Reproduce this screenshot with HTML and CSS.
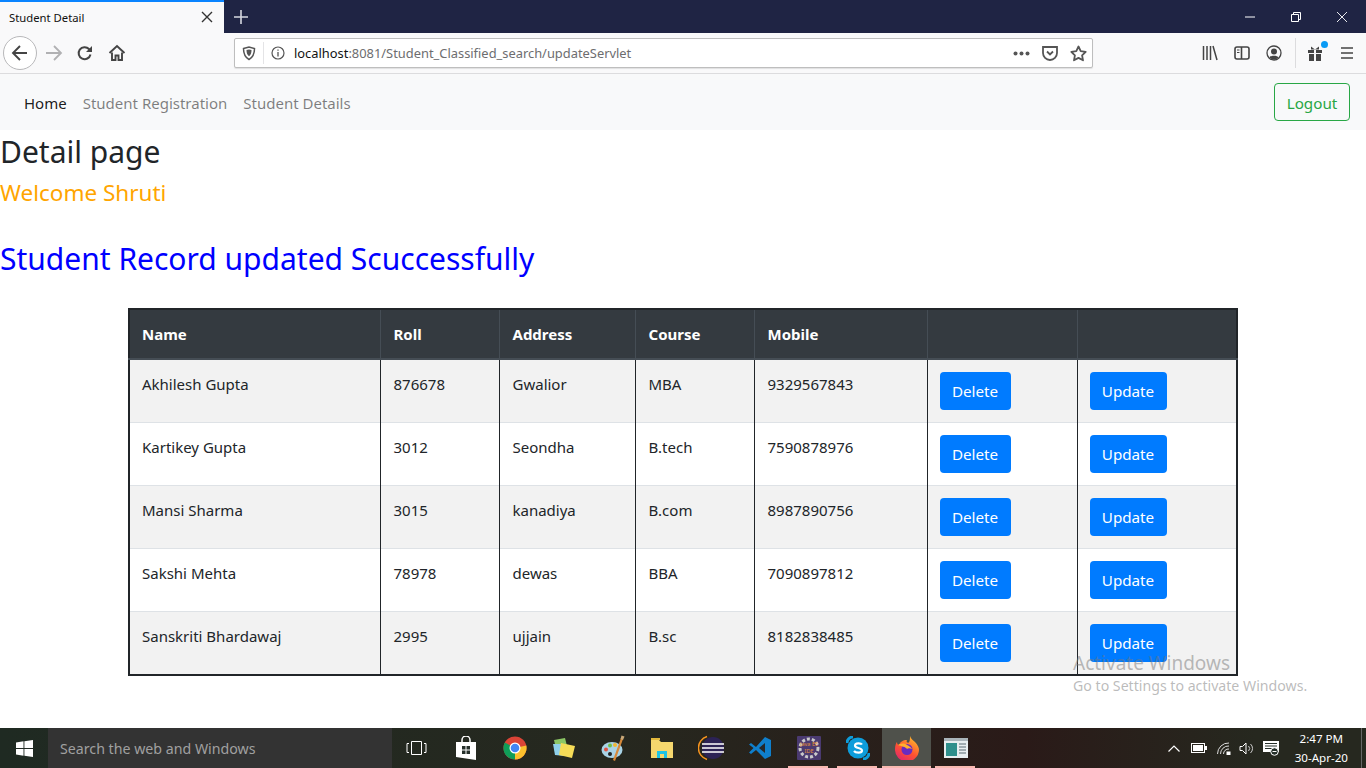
FILE: index.html
```html
<!DOCTYPE html>
<html lang="en">
<head>
<meta charset="utf-8">
<title>Student Detail</title>
<link rel="stylesheet" href="styles.css">
</head>
<body>
<div class="screen">
  <header class="chrome">
    <div class="tabstrip">
      <div class="tab">
        <span class="tab-title">Student Detail</span>
        <svg class="tab-x" width="12" height="12" viewBox="0 0 12 12"><path d="M1 1l10 10M11 1L1 11" stroke="#333" stroke-width="1.4"/></svg>
      </div>
      <svg class="newtab" width="16" height="16" viewBox="0 0 16 16"><path d="M8 1v14M1 8h14" stroke="#d5d7e0" stroke-width="1.6"/></svg>
      <div class="winbtns">
        <svg width="12" height="12" viewBox="0 0 12 12"><path d="M1 6h10" stroke="#fff"/></svg>
        <svg width="12" height="12" viewBox="0 0 12 12"><path d="M1.500 3.500h7v7h-7zM3.500 3.500v-2h7v7h-2" fill="none" stroke="#fff"/></svg>
        <svg width="12" height="12" viewBox="0 0 12 12"><path d="M1 1l10 10M11 1L1 11" stroke="#fff" stroke-width=".9"/></svg>
      </div>
    </div>
    <div class="toolbar">
      <div class="nav-left">
        <span class="back"><svg width="18" height="18" viewBox="0 0 18 18"><path d="M2 9h14M9 2L2 9l7 7" fill="none" stroke="#444" stroke-width="1.900"/></svg></span>
        <svg class="fwd" width="18" height="18" viewBox="0 0 18 18"><path d="M1 9h15M9 2l7 7-7 7" fill="none" stroke="#b1b1b3" stroke-width="1.800"/></svg>
        <svg class="reload" width="16" height="16" viewBox="0 0 16 16"><path d="M13.500 9.500A6 6 0 1 1 12 4l2 2" fill="none" stroke="#444" stroke-width="2"/><path d="M15 1v6H9z" fill="#444"/></svg>
        <svg class="home" width="18" height="18" viewBox="0 0 18 18"><path d="M1.500 9L9 2l7.500 7" fill="none" stroke="#444" stroke-width="1.900"/><path d="M4 8.500V16h3.500v-4.500h3V16H14V8.500" fill="none" stroke="#444" stroke-width="1.900"/></svg>
      </div>
      <div class="urlbar">
        <svg class="shield" width="14" height="15" viewBox="0 0 14 15"><path d="M1.500 2.500L7 1l5.500 1.500c0 5-1 8.500-5.500 11C2.500 11 1.500 7.500 1.500 2.500z" fill="none" stroke="#555" stroke-width="1.500"/><path d="M4.500 4L7 3.400 9.500 4c0 3-.6 4.800-2.500 6.200C5.100 8.800 4.500 7 4.500 4z" fill="#555"/></svg>
        <span class="url-sep"></span>
        <svg class="info" width="14" height="14" viewBox="0 0 14 14"><circle cx="7" cy="7" r="6" fill="none" stroke="#555" stroke-width="1.200"/><path d="M7 6v4.500M7 3.500v1.300" stroke="#555" stroke-width="1.300"/></svg>
        <span class="url"><span class="host">localhost</span>:8081/Student_Classified_search/updateServlet</span>
        <span class="url-actions">
          <svg width="17" height="5" viewBox="0 0 17 5"><circle cx="2.500" cy="2.500" r="2" fill="#555"/><circle cx="8.500" cy="2.500" r="2" fill="#555"/><circle cx="14.500" cy="2.500" r="2" fill="#555"/></svg>
          <svg width="16" height="16" viewBox="0 0 16 16"><path d="M1 2h14v6a7 7 0 0 1-14 0z" fill="none" stroke="#555" stroke-width="1.800"/><path d="M5 6.500l3 3 3-3" fill="none" stroke="#555" stroke-width="1.800"/></svg>
          <svg width="17" height="17" viewBox="0 0 17 17"><path d="M8.500 1.500l2.200 4.600 5 .7-3.600 3.500.9 5-4.500-2.400L4 15.300l.9-5L1.300 6.800l5-.7z" fill="none" stroke="#555" stroke-width="1.800" stroke-linejoin="round"/></svg>
        </span>
      </div>
      <div class="tools">
        <svg width="16" height="16" viewBox="0 0 16 16"><path d="M1.500 1v14M5 1v14M8.500 1v14M11 1l4 14" stroke="#444" stroke-width="1.500"/></svg>
        <svg width="16" height="16" viewBox="0 0 16 16"><rect x="1" y="2" width="14" height="12" rx="2" fill="none" stroke="#444" stroke-width="1.600"/><path d="M7.500 2v12" stroke="#444" stroke-width="1.600"/><path d="M3 5h2.500M3 7.500h2.500" stroke="#444"/></svg>
        <svg width="16" height="16" viewBox="0 0 16 16"><circle cx="8" cy="8" r="7" fill="none" stroke="#444" stroke-width="1.300"/><circle cx="8" cy="6.500" r="3" fill="#444"/><path d="M3.500 12.500c1-2.500 8-2.500 9 0a6 6 0 0 1-9 0z" fill="#444"/></svg>
        <span class="tool-sep"></span>
        <span class="gift">
          <svg width="16" height="18" viewBox="0 0 16 18"><path d="M1 6h6v3H1zM9 6h6v3H9zM2 10h5v7H2zM9 10h5v7H9z" fill="#444"/><path d="M4 2.500l4 3 4-3v3H4z" fill="#444"/></svg>
          <span class="gift-dot"></span>
        </span>
        <svg class="menu" width="14" height="14" viewBox="0 0 14 14"><path d="M1 2h12M1 7h12M1 12h12" stroke="#444" stroke-width="1.600"/></svg>
      </div>
    </div>
  </header>

  <main class="page">
    <nav class="navbar">
      <ul class="nav-links">
        <li class="active">Home</li>
        <li>Student Registration</li>
        <li>Student Details</li>
      </ul>
      <button class="logout">Logout</button>
    </nav>
    <h2 class="title">Detail page</h2>
    <h4 class="welcome">Welcome Shruti</h4>
    <h2 class="updated">Student Record updated Scuccessfully</h2>
    <div class="table-wrap">
      <table class="students">
        <colgroup>
          <col class="c1"><col class="c2"><col class="c3"><col class="c4"><col class="c5"><col class="c6"><col class="c7">
        </colgroup>
        <thead>
          <tr><th>Name</th><th>Roll</th><th>Address</th><th>Course</th><th>Mobile</th><th></th><th></th></tr>
        </thead>
        <tbody>
          <tr><td>Akhilesh Gupta</td><td>876678</td><td>Gwalior</td><td>MBA</td><td>9329567843</td><td><a class="btn del">Delete</a></td><td><a class="btn upd">Update</a></td></tr>
          <tr><td>Kartikey Gupta</td><td>3012</td><td>Seondha</td><td>B.tech</td><td>7590878976</td><td><a class="btn del">Delete</a></td><td><a class="btn upd">Update</a></td></tr>
          <tr><td>Mansi Sharma</td><td>3015</td><td>kanadiya</td><td>B.com</td><td>8987890756</td><td><a class="btn del">Delete</a></td><td><a class="btn upd">Update</a></td></tr>
          <tr><td>Sakshi Mehta</td><td>78978</td><td>dewas</td><td>BBA</td><td>7090897812</td><td><a class="btn del">Delete</a></td><td><a class="btn upd">Update</a></td></tr>
          <tr><td>Sanskriti Bhardawaj</td><td>2995</td><td>ujjain</td><td>B.sc</td><td>8182838485</td><td><a class="btn del">Delete</a></td><td><a class="btn upd">Update</a></td></tr>
        </tbody>
      </table>
    </div>
    <div class="activate">
      <div class="act-1">Activate Windows</div>
      <div class="act-2">Go to Settings to activate Windows.</div>
    </div>
  </main>

  <footer class="taskbar">
    <span class="start"><svg width="17" height="17" viewBox="0 0 17 17"><path d="M0 2.400L7.500 1.300v6.700H0zM8.400 1.200L17 0v8H8.400zM0 9h7.500v6.700L0 14.600zM8.400 9H17v8l-8.600-1.200z" fill="#fff"/></svg></span>
    <span class="search">Search the web and Windows</span>
    <div class="task-icons">
      <span class="ti"><svg width="21" height="14" viewBox="0 0 21 14"><path d="M5.500.5h10v13h-10z" fill="none" stroke="#fff"/><path d="M3 2.500H1v9h2M18 2.500h2v9h-2" fill="none" stroke="#fff"/></svg></span>
      <span class="ti"><svg width="22" height="24" viewBox="0 0 22 24"><path d="M1 6h20v18L1 21z" fill="#fff"/><path d="M7 6V4a4 4 0 0 1 8 0v2" fill="none" stroke="#fff" stroke-width="1.500"/><path d="M7 10h3.500v3.500H7zM11.500 10H15v3.500h-3.500zM7 14.500h3.500V18H7zM11.500 14.500H15V18h-3.500z" fill="#26302a"/></svg></span>
      <span class="ti"><svg width="24" height="24" viewBox="0 0 24 24"><circle cx="12" cy="12" r="11.500" fill="#db4437"/><path d="M12 12L23.300 9.500A11.500 11.500 0 0 1 12 23.500z" fill="#fbc02d"/><path d="M12 12L12 23.500A11.500 11.500 0 0 1 1.800 6.500z" fill="#0f9d58"/><circle cx="12" cy="12" r="5.500" fill="#fff"/><circle cx="12" cy="12" r="4.300" fill="#4285f4"/></svg></span>
      <span class="ti"><svg width="26" height="22" viewBox="0 0 26 22"><path d="M3 3l11-2 3 12-11 3z" fill="#8cc665"/><path d="M2 7l10 0 2 12-10-1z" fill="#8ed0ea"/><path d="M10 6l14 3-3 12-13-3z" fill="#f6dc57"/></svg></span>
      <span class="ti"><svg width="24" height="26" viewBox="0 0 24 26"><ellipse cx="11" cy="15" rx="10.500" ry="8" fill="#a9d3e6"/><circle cx="5" cy="14.500" r="2" fill="#e15241"/><circle cx="9" cy="10.500" r="2" fill="#6fbf4a"/><circle cx="14" cy="10" r="2" fill="#f2b632"/><circle cx="9" cy="19" r="2" fill="#222"/><path d="M20 3l2 1-8 22-2-1z" fill="#d6893a"/><path d="M19.500 4l1-3.500 3 1-1.500 3.500z" fill="#c9a878"/></svg></span>
      <span class="ti"><svg width="22" height="20" viewBox="0 0 22 20"><path d="M0 2h8l2 2h12v16H0z" fill="#f5d76e"/><path d="M0 0h9v2H0z" fill="#e3b93d"/><path d="M6 13h10v7h-3v-4H9v4H6z" fill="#1ec4e6"/></svg></span>
      <span class="ti"><svg width="26" height="26" viewBox="0 0 26 26"><path d="M9 1.500a12 12 0 0 0 0 23" fill="none" stroke="#f7941e" stroke-width="1.500"/><circle cx="15" cy="13" r="11" fill="#2c2255"/><path d="M4 9h22M4 13h22M4 17h22" stroke="#fff" stroke-width="1.500"/></svg></span>
      <span class="ti"><svg width="24" height="24" viewBox="0 0 24 24"><path d="M17 1l6 3v16l-6 3-9-9-5 4-2-1.500L5.500 12 1 8.500 3 7l5 4z" fill="#0f7fcc"/><path d="M17 7v10l-6-5z" fill="#26282a"/></svg></span>
      <span class="ti ti-run"><svg width="24" height="24" viewBox="0 0 24 24"><rect width="24" height="24" rx="1" fill="#4a3a70"/><circle cx="12" cy="12" r="9" fill="none" stroke="#c9c9c9" stroke-width="3" stroke-dasharray="3 2"/><text x="12" y="10" class="jv" text-anchor="middle">Java EE</text><text x="12" y="17" class="jv" text-anchor="middle">IDE</text></svg></span>
      <span class="ti ti-run"><svg width="24" height="24" viewBox="0 0 24 24"><circle cx="12" cy="12" r="10.500" fill="#0d9ddb"/><path d="M1 7a6 6 0 0 1 6-6M23 17a6 6 0 0 1-6 6" stroke="#0d9ddb" stroke-width="3" fill="none"/><path d="M16 8.500c-1-1.500-7-2-7 1.200 0 3 7 1.600 7 4.800 0 3-6.500 2.500-8 .5" fill="none" stroke="#fff" stroke-width="2.200"/></svg></span>
      <span class="ti ti-active"><svg width="24" height="24" viewBox="0 0 24 24"><defs><linearGradient id="fx" x1="0.800" y1="0" x2="0.200" y2="1"><stop offset="0" stop-color="#ffc02c"/><stop offset=".55" stop-color="#ff5330"/><stop offset="1" stop-color="#e0246e"/></linearGradient></defs><path d="M15 0c1 3 3 4 5 6 3 3 4 6 4 8a12 12 0 1 1-24-1c0-3 1-6 2-7 0 2 1 3 2 3 1-3 4-5 8-5-1 2 0 2 1 3 2-1 2-4 2-7z" fill="url(#fx)"/><circle cx="12" cy="13.500" r="5.500" fill="#6a2bc0"/><path d="M3 9c3-2 7-2 9 0 2 1 4 2 5 4-2-1-4-1-5 0-1-2-6-3-9-4z" fill="#ffb02e"/></svg></span>
      <span class="ti ti-run"><svg width="24" height="20" viewBox="0 0 24 20"><rect width="24" height="20" fill="#e8eef0"/><rect y="0" width="24" height="3" fill="#aab4ba"/><rect x="2" y="5" width="11" height="13" fill="#2f8f8c"/><path d="M15 6h7M15 9h7M15 12h7M15 15h7" stroke="#5a6a72"/></svg></span>
    </div>
    <div class="tray">
      <svg class="t-caret" width="12" height="7" viewBox="0 0 12 7"><path d="M.5 6.500L6 1l5.500 5.500" fill="none" stroke="#fff" stroke-width="1.200"/></svg>
      <svg class="t-batt" width="16" height="10" viewBox="0 0 16 10"><rect x=".5" y=".5" width="13" height="9" fill="none" stroke="#fff"/><rect x="2" y="2" width="10" height="6" fill="#fff"/><rect x="14" y="3" width="2" height="4" fill="#fff"/></svg>
      <svg class="t-wifi" width="14" height="13" viewBox="0 0 14 13"><path d="M.5 12A11 11 0 0 1 12 1M3.500 12A8 8 0 0 1 12 4M6.500 12A5 5 0 0 1 12 7" fill="none" stroke="#ddd"/><rect x="9.500" y="9.500" width="4" height="3.500" fill="#fff"/></svg>
      <svg width="16" height="13" viewBox="0 0 16 13"><path d="M1 4.500h2.500L7 1v11L3.500 8.500H1z" fill="none" stroke="#fff"/><path d="M9.500 4a3.500 3.500 0 0 1 0 5M11.500 2a6 6 0 0 1 0 9" fill="none" stroke="#ccc"/></svg>
      <svg width="16" height="16" viewBox="0 0 16 16"><path d="M0 1h16v11H0z" fill="#fff"/><path d="M2 3.500h12M2 6h12M2 8.500h7" stroke="#26302a"/><circle cx="11.500" cy="11.500" r="3.800" fill="#26302a" stroke="#fff"/><path d="M9.500 11.500h4" stroke="#fff"/></svg>
      <div class="clock"><div>2:47 PM</div><div>30-Apr-20</div></div>
      <span class="desk-edge"></span>
    </div>
  </footer>
</div>
</body>
</html>
```
FILE: styles.css
```css
* { box-sizing: border-box; }
html, body { margin: 0; padding: 0; }
body { width: 1366px; height: 768px; overflow: hidden; background: #fff; font-family: "Noto Sans", "Open Sans", sans-serif; color: #212529; }
.screen { display: flex; flex-direction: column; width: 1366px; height: 768px; }

.tabstrip { display: flex; align-items: center; height: 33px; background: #1f2444; }
.tab { display: flex; align-items: center; justify-content: space-between; width: 224px; height: 33px; padding: 0 11px 1px 9px; background: #f9f9fa; border-top: 2px solid #0a84ff; }
.tab-title { font: 11.300px "Noto Sans", sans-serif; color: #111; }
.newtab { margin-left: 9px; }
.winbtns { display: flex; gap: 34px; margin-left: auto; margin-right: 18px; }

.toolbar { display: flex; align-items: center; height: 41px; background: #f9f9fa; border-bottom: 1px solid #dcdcde; padding-left: 3px; }
.nav-left { display: flex; align-items: center; width: 231px; }
.back { display: flex; align-items: center; justify-content: center; width: 34px; height: 34px; border: 1px solid #b8b8ba; border-radius: 50%; background: #fff; }
.fwd { margin-left: 8px; }
.reload { margin-left: 14px; }
.home { margin-left: 15px; }
.urlbar { display: flex; align-items: center; width: 859px; height: 30px; background: #fff; border: 1px solid #bebebe; border-radius: 2px; padding-left: 7px; box-shadow: 0 1px 1px rgba(0,0,0,.1); }
.url-sep { width: 1px; height: 22px; background: #e4e4e6; margin: 0 7px; }
.url { font: 12.880px "Noto Sans", sans-serif; color: #6d6d6f; margin-left: 9px; }
.host { color: #111; }
.url-actions { display: flex; align-items: center; gap: 12px; margin-left: auto; margin-right: 5px; }
.tools { display: flex; align-items: center; gap: 16px; margin-left: 109px; }
.tool-sep { width: 1px; height: 30px; background: #dcdcde; margin: 0 -5px 0 -3px; }
.gift { position: relative; display: flex; }
.gift-dot { position: absolute; top: -3px; right: -5px; width: 7px; height: 7px; border-radius: 50%; background: #0a9bf5; }
.menu { margin-left: 1px; }

.page { position: relative; flex: 1; min-height: 0; }
.navbar { display: flex; align-items: center; justify-content: space-between; height: 56px; padding: 0 16px 0 24px; background: #f8f9fa; }
.nav-links { display: flex; gap: 16px; list-style: none; margin: 0; padding: 2px 0 0; font-size: 15px; color: rgba(0,0,0,.5); }
.nav-links .active { color: rgba(0,0,0,.9); }
.logout { height: 38px; width: 76px; padding: 2px 0 0; font: 15.200px "Noto Sans", sans-serif; color: #28a745; background: transparent; border: 1px solid #28a745; border-radius: 4px; }

h2, h4 { margin: 0; font-weight: 400; }
.title { font-size: 30px; line-height: 37px; margin-top: 3px; }
.welcome { font-size: 22.500px; line-height: 29px; color: orange; margin-top: 8px; }
.updated { font-size: 30px; line-height: 37px; color: blue; margin-top: 33px; }

.table-wrap { padding: 31px 128px 0; }
.students { width: 1110px; table-layout: fixed; border-collapse: collapse; border: 2px solid #212529; font-size: 15px; }
.c1 { width: 251px; } .c2 { width: 119px; } .c3 { width: 136px; } .c4 { width: 119px; } .c5 { width: 173px; } .c6 { width: 150px; } .c7 { width: 160px; }
.students th { height: 50px; padding: 0 12px; text-align: left; font-weight: 700; color: #fff; background: #343a40; border-right: 1px solid #454d55; border-bottom: 2px solid #454d55; }
.students td { height: 63px; padding: 12px; vertical-align: top; border-right: 1px solid #212529; border-top: 1px solid #dee2e6; line-height: 24px; }
.students th:nth-child(n+2):nth-child(-n+5), .students td:nth-child(n+2):nth-child(-n+5) { padding-left: 13px; }
.students th:last-child, .students td:last-child { border-right: none; }
.students tbody tr:nth-child(odd) td { background: #f2f2f2; }
.btn { display: inline-block; height: 38px; line-height: 38px; text-align: center; font-size: 15.200px; color: #fff; background: #007bff; border-radius: 4px; }
.del { width: 71px; }
.upd { width: 77px; }

.activate { position: absolute; left: 1073px; top: 576px; color: rgba(120,120,120,.5); }
.act-1 { font-size: 19px; line-height: 26px; }
.act-2 { font-size: 14.150px; line-height: 19px; }

.taskbar { display: flex; align-items: center; height: 40px; flex: none; background: linear-gradient(90deg, #1f2a22 0%, #26281f 45%, #2a1a18 75%, #26281f 92%, #26281f 100%); }
.start { display: flex; align-items: center; justify-content: center; width: 48px; height: 40px; }
.search { display: flex; align-items: center; width: 344px; height: 40px; padding-left: 12px; background: #333; color: #a0a0a0; font-size: 14.200px; }
.task-icons { display: flex; height: 40px; }
.ti { position: relative; display: flex; align-items: center; justify-content: center; width: 49px; height: 40px; }
.ti-active { background: #4f514b; }
.ti-run::after, .ti-active::after { content: ""; position: absolute; bottom: 0; left: 4px; right: 5px; height: 2px; background: #f8b8b0; }
.ti-active::after { left: 0; right: 0; }
.jv { font: 5.500px "Noto Sans", sans-serif; fill: #e8913a; }
.tray { display: flex; align-items: center; gap: 8px; margin-left: auto; height: 40px; color: #fff; }
.t-batt { margin-left: 3px; }
.t-wifi { margin-left: 2px; }
.clock { font-size: 11.600px; line-height: 19px; text-align: center; margin-left: 8px; }
.desk-edge { width: 1px; height: 40px; background: #666; margin-left: 5px; margin-right: 4px; }
```
